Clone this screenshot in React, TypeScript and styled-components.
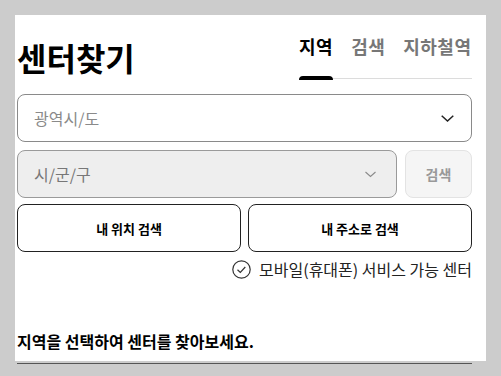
import styled, { createGlobalStyle } from "styled-components";

const GlobalStyle = createGlobalStyle`
  html, body {
    margin: 0;
    padding: 0;
    background: #cccccc;
  }
  body {
    font-family: "Noto Sans CJK KR", "Noto Sans", sans-serif;
    color: #111;
  }
  * {
    box-sizing: border-box;
  }
`;

const Page = styled.div`
  padding: 15px 0 0 15px;
  height: 376px;
  overflow: hidden;
`;

const Panel = styled.div`
  width: 471px;
  height: 346px;
  background: #fff;
  padding-left: 2px;
`;

const Content = styled.div`
  width: 455px;
  padding-bottom: 11px;
  border-bottom: 1px solid #555;
`;

const Header = styled.div`
  display: flex;
  justify-content: space-between;
  align-items: flex-end;
  height: 64px;
`;

const Title = styled.h1`
  margin: 0 0 1px;
  font-size: 32px;
  line-height: 42px;
  font-weight: 700;
  color: #000;
`;

const Tabs = styled.div`
  display: flex;
  gap: 18px;
  width: 173px;
  border-bottom: 1px solid #dcdcdc;
`;

const Tab = styled.div<{ $active?: boolean }>`
  position: relative;
  font-size: 18px;
  line-height: 26px;
  font-weight: 700;
  padding-bottom: 19px;
  letter-spacing: 0.5px;
  color: ${p => (p.$active ? "#000" : "#777")};
  &::after {
    content: "";
    display: ${p => (p.$active ? "block" : "none")};
    position: absolute;
    left: 0;
    right: 0;
    bottom: -2px;
    height: 4px;
    border-radius: 4px 4px 0 0;
    background: #000;
  }
`;

const Form = styled.div`
  display: flex;
  flex-direction: column;
  margin-top: 15px;
`;

const SelectBox = styled.div<{ $disabled?: boolean }>`
  flex: 1 1 auto;
  display: flex;
  align-items: center;
  justify-content: space-between;
  height: 48px;
  padding: 0 ${p => (p.$disabled ? 20 : 17)}px 0 16px;
  border: 1px solid ${p => (p.$disabled ? "#9a9a9a" : "#8a8a8a")};
  border-radius: 8px;
  background: ${p => (p.$disabled ? "#eeeeee" : "#fff")};
  color: ${p => (p.$disabled ? "#777" : "#8a8a8a")};
  font-size: 16px;
`;

const Row = styled.div<{ $gap: number; $top: number }>`
  display: flex;
  gap: ${p => p.$gap}px;
  margin-top: ${p => p.$top}px;
`;

const SearchButton = styled.button`
  flex: none;
  width: 67px;
  height: 48px;
  border: 1px solid #e3e3e3;
  border-radius: 8px;
  background: #f5f5f5;
  color: #999;
  font-family: inherit;
  font-size: 14px;
  font-weight: 700;
  padding: 0;
`;

const OutlineButton = styled.button`
  flex: 1;
  height: 48px;
  border: 1px solid #222;
  border-radius: 8px;
  background: #fff;
  color: #000;
  font-family: inherit;
  font-size: 13px;
  font-weight: 700;
  padding: 0;
`;

const CheckLine = styled.div`
  display: flex;
  justify-content: flex-end;
  align-items: center;
  gap: 8px;
  margin-top: 8px;
  height: 18px;
  font-size: 16px;
  color: #222;
`;

const Guide = styled.p`
  margin: 52px 0 0;
  font-size: 16px;
  line-height: 22px;
  font-weight: 700;
  color: #000;
`;

const Chevron = ({ light }: { light?: boolean }) => (
  <svg width={light ? 11 : 13} height="7" viewBox={light ? "0 0 11 7" : "0 0 13 7"} fill="none">
    <path
      d={light ? "M0.5 1 L5.5 5.5 L10.5 1" : "M0.7 0.7 L6.5 6 L12.3 0.7"}
      stroke={light ? "#8a8a8a" : "#222"}
      strokeWidth={light ? 1.1 : 1.5}
    />
  </svg>
);

const CheckCircle = () => (
  <svg width="19" height="19" viewBox="0 0 19 19" fill="none">
    <circle cx="9.5" cy="9.5" r="8.7" stroke="#333" strokeWidth="1.2" />
    <path d="M5.5 9.8 L8.3 12.4 L13.3 7" stroke="#333" strokeWidth="1.2" />
  </svg>
);

export default function App() {
  return (
    <>
      <GlobalStyle />
      <Page>
        <Panel>
          <Content>
            <Header>
              <Title>센터찾기</Title>
              <Tabs>
                <Tab $active>지역</Tab>
                <Tab>검색</Tab>
                <Tab>지하철역</Tab>
              </Tabs>
            </Header>
            <Form>
              <SelectBox>
                <span>광역시/도</span>
                <Chevron />
              </SelectBox>
              <Row $gap={8} $top={8}>
                <SelectBox $disabled>
                  <span>시/군/구</span>
                  <Chevron light />
                </SelectBox>
                <SearchButton>검색</SearchButton>
              </Row>
              <Row $gap={7} $top={6}>
                <OutlineButton>내 위치 검색</OutlineButton>
                <OutlineButton>내 주소로 검색</OutlineButton>
              </Row>
              <CheckLine>
                <CheckCircle />
                <span>모바일(휴대폰) 서비스 가능 센터</span>
              </CheckLine>
            </Form>
            <Guide>지역을 선택하여 센터를 찾아보세요.</Guide>
          </Content>
        </Panel>
      </Page>
    </>
  );
}
